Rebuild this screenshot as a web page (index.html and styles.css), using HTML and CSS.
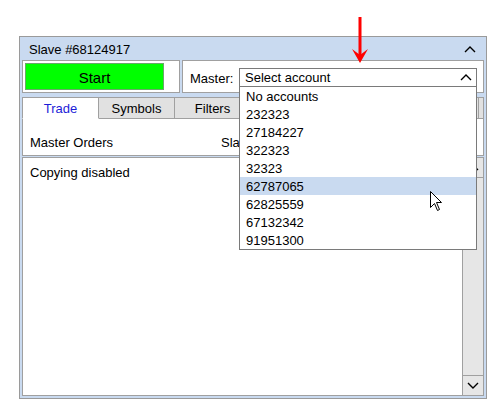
FILE: index.html
```html
<!DOCTYPE html>
<html lang="en">
<head>
    <meta charset="UTF-8">
    <title>Slave #68124917</title>
    <link rel="stylesheet" href="styles.css">
</head>
<body>
    <div class="panel">
        <!-- Title bar -->
        <div class="panel-title">
            <span>Slave #68124917</span>
            <svg class="chevron" width="12" height="7" viewBox="0 0 12 7"><polyline points="1,6 6,1 11,6"/></svg>
        </div>

        <!-- Start / master selection -->
        <div class="controls">
            <div class="start-box">
                <button class="start-btn">Start</button>
            </div>
            <div class="master-box">
                <span class="master-label">Master:</span>
                <div class="combo">
                    <span class="combo-value">Select account</span>
                    <svg class="chevron" width="12" height="7" viewBox="0 0 12 7"><polyline points="1,6 6,1 11,6"/></svg>
                    <ul class="combo-list">
                        <li>No accounts</li>
                        <li>232323</li>
                        <li>27184227</li>
                        <li>322323</li>
                        <li>32323</li>
                        <li class="hover">62787065</li>
                        <li>62825559</li>
                        <li>67132342</li>
                        <li>91951300</li>
                    </ul>
                </div>
            </div>
        </div>

        <!-- Tabs (the ones under the open list are not visible) -->
        <div class="tabs">
            <div class="tab active">Trade</div>
            <div class="tab">Symbols</div>
            <div class="tab">Filters</div>
            <div class="tab"></div>
            <div class="tab"></div>
            <div class="tab"></div>
            <div class="tab-rest"></div>
        </div>
        <div class="tab-page">
            <span class="col-master">Master Orders</span>
            <span class="col-slave">Slave Orders</span>
        </div>

        <!-- Log -->
        <div class="log">
            <div class="log-text">Copying disabled</div>
            <div class="scrollbar">
                <div class="sb-btn sb-up">
                    <svg class="chevron" width="12" height="7" viewBox="0 0 12 7"><polyline points="1,6 6,1 11,6"/></svg>
                </div>
                <div class="sb-track"></div>
                <div class="sb-btn sb-down">
                    <svg class="chevron" width="12" height="7" viewBox="0 0 12 7"><polyline points="1,1 6,6 11,1"/></svg>
                </div>
            </div>
        </div>
    </div>

    <!-- annotation arrow -->
    <svg class="red-arrow" width="20" height="50" viewBox="0 0 20 50">
        <rect x="8.5" y="0" width="3" height="40" fill="#ff0000"/>
        <polygon points="2,32 10,38 18,32 10,46" fill="#ff0000"/>
    </svg>

    <!-- mouse pointer -->
    <svg class="pointer" width="14" height="21" viewBox="0 0 14 21">
        <polygon points="0.5,0.5 0.5,16.5 4.5,12.5 7.5,19.5 9.5,18.5 6.5,11.5 11.5,11.5" fill="#fff" stroke="#000" stroke-width="1" stroke-linejoin="miter"/>
    </svg>
</body>
</html>
```

FILE: styles.css
```css
* {
    margin: 0;
    padding: 0;
    box-sizing: border-box;
}

body {
    font-family: 'Liberation Sans', Arial, sans-serif;
    font-size: 13px;
    line-height: 18px;
    color: #000;
    background-color: white;
    padding: 36px 0 0 19px;
    position: relative;
    width: 502px;
    height: 417px;
    overflow: hidden;
}

.chevron {
    display: block;
    fill: none;
    stroke: #000;
    stroke-width: 1.4;
}

.panel {
    width: 468px;
    height: 363px;
    background-color: #c9daf0;
    border: 1px solid #9a9a9a;
    padding: 0 2px 2px 2px;
    display: flex;
    flex-direction: column;
}

.panel-title {
    height: 23px;
    display: flex;
    align-items: center;
    justify-content: space-between;
    padding: 2px 8px 0 7px;
}

.panel-title .chevron {
    margin-top: -1px;
}

/* start + master row */

.controls {
    display: flex;
    gap: 2px;
    height: 33px;
    margin-bottom: 4px;
}

.start-box {
    width: 158px;
    background-color: white;
    border: 1px solid #a0a0a0;
    padding: 2px;
}

.start-btn {
    display: block;
    width: 139px;
    height: 27px;
    background-color: #00ff00;
    border: 1px solid #6aa86a;
    font-family: inherit;
    font-size: 15px;
    color: #000;
    padding-top: 1px;
}

.master-box {
    flex: 1;
    background-color: white;
    border: 1px solid #a0a0a0;
    display: flex;
    align-items: flex-start;
    padding: 7px 6px 0 7px;
}

.master-label {
    margin-right: auto;
    line-height: 19px;
    padding-top: 1px;
}

.combo {
    position: relative;
    width: 238px;
    height: 19px;
    border: 1px solid #7a7a7a;
    display: flex;
    align-items: center;
    justify-content: space-between;
    padding: 0 4px 0 5px;
}

.combo-value {
    padding-top: 1px;
}

.combo-list {
    position: absolute;
    top: 100%;
    left: -1px;
    width: 238px;
    list-style: none;
    background-color: white;
    border: 1px solid #7a7a7a;
    z-index: 5;
}

.combo-list li {
    height: 18px;
    padding: 1px 0 0 6px;
    line-height: 17px;
}

.combo-list li.hover {
    background-color: #c9daf0;
}

/* tabs */

.tabs {
    display: flex;
    height: 22px;
}

.tab {
    width: 76px;
    background-color: #e1e1e1;
    border-top: 1px solid #a0a0a0;
    border-right: 1px solid #a0a0a0;
    border-bottom: 1px solid #a0a0a0;
    text-align: center;
    line-height: 21px;
}

.tab.active {
    width: 77px;
    background-color: white;
    border-left: 1px solid #a0a0a0;
    border-bottom-color: white;
    color: #1c1cd8;
}

.tab-rest {
    flex: 1;
    background-color: #e1e1e1;
    border-top: 1px solid #a0a0a0;
    border-right: 1px solid #a0a0a0;
    border-bottom: 1px solid #a0a0a0;
}

.tab-page {
    height: 37px;
    background-color: white;
    border: 1px solid #a0a0a0;
    border-top: none;
    display: flex;
    padding: 15px 0 0 7px;
    margin-bottom: 1px;
}

.col-master {
    width: 191px;
}

.col-slave {
    white-space: nowrap;
}

/* log */

.log {
    flex: 1;
    background-color: white;
    border: 1px solid #a0a0a0;
    display: flex;
}

.log-text {
    flex: 1;
    padding: 6px 0 0 7px;
}

.scrollbar {
    width: 21px;
    background-color: #e6e6e6;
    border-left: 1px solid #a0a0a0;
    display: flex;
    flex-direction: column;
}

.sb-btn {
    height: 20px;
    display: flex;
    align-items: center;
    justify-content: center;
}

.sb-up {
    border-bottom: 1px solid #a0a0a0;
}

.sb-down {
    border-top: 1px solid #a0a0a0;
}

.sb-track {
    flex: 1;
}

/* overlays */

.red-arrow {
    position: absolute;
    left: 350px;
    top: 17px;
}

.pointer {
    position: absolute;
    left: 430px;
    top: 191px;
    z-index: 10;
}
```
